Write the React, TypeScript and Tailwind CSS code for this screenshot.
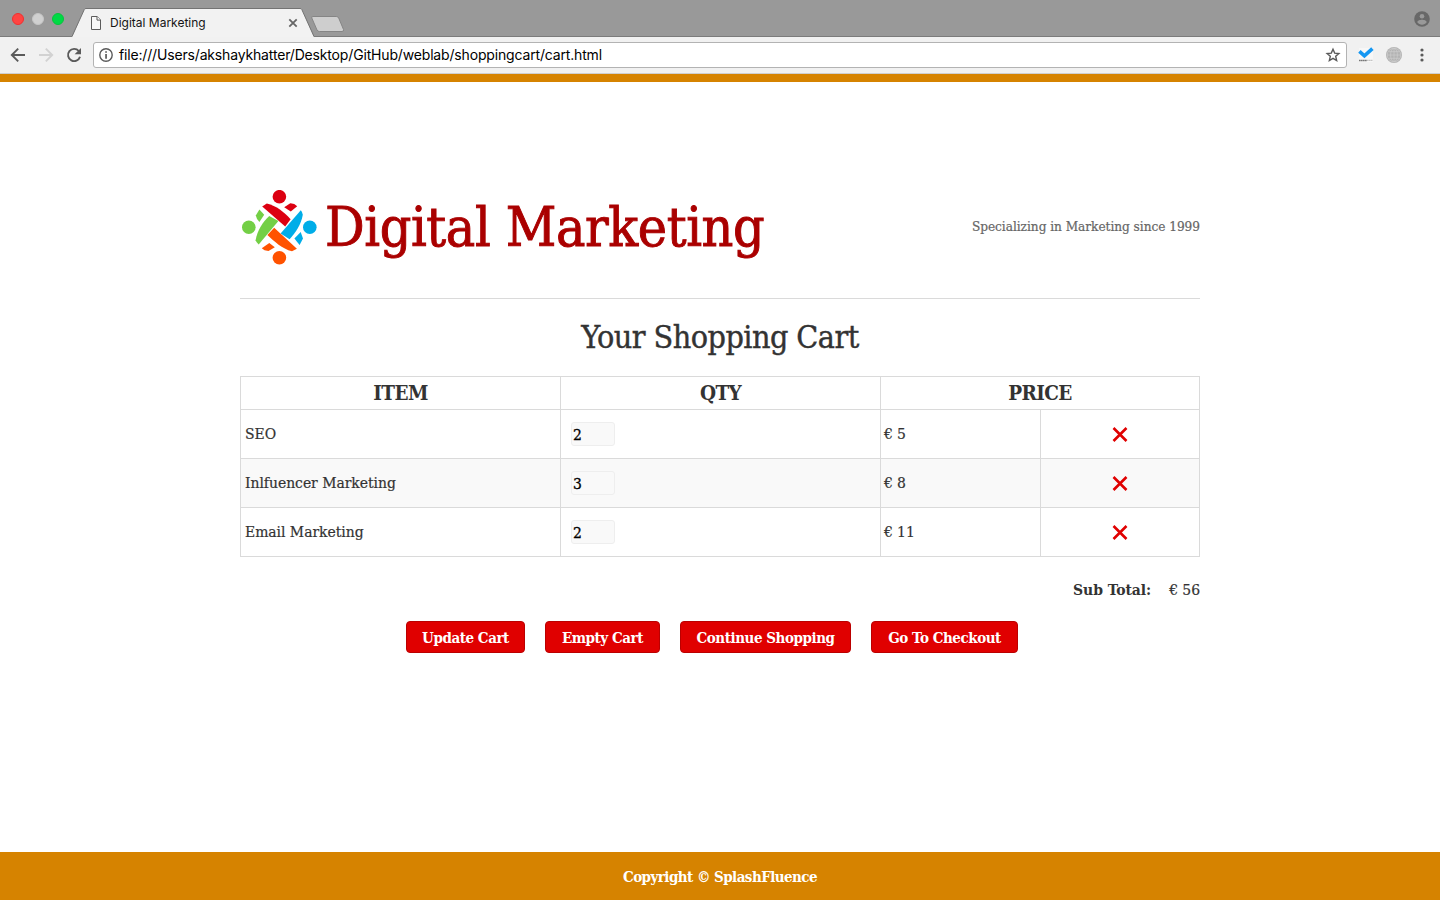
type CartItem = { name: string; qty: number; price: number };

const items: CartItem[] = [
  { name: "SEO", qty: 2, price: 5 },
  { name: "Inlfuencer Marketing", qty: 3, price: 8 },
  { name: "Email Marketing", qty: 2, price: 11 },
];

const actions = [
  { label: "Update Cart", width: "w-[119px]" },
  { label: "Empty Cart", width: "w-[115px]" },
  { label: "Continue Shopping", width: "w-[171px]" },
  { label: "Go To Checkout", width: "w-[147px]" },
];

function TabStrip() {
  return (
    <div className="flex h-[37px] shrink-0 border-b border-[#7b7b7b] bg-[#999999]">
      <div className="flex w-[72px] gap-2 pl-3 pt-[13px]">
        <span className="size-3 rounded-full border border-[#f0302f] bg-[#ff4442]" />
        <span className="size-3 rounded-full border border-[#c5c5c5] bg-[#d0d0d0]" />
        <span className="size-3 rounded-full border border-[#08c43c] bg-[#00da45]" />
      </div>
      <div className="relative h-[37px] w-[242px]">
        <svg className="absolute left-0 top-0" width="242" height="37" viewBox="0 0 242 37">
          <path d="M0 37 12.3 9.5Q12.8 8.5 14 8.5H228Q229.3 8.5 229.8 9.5L242 37Z" fill="#f2f2f2" />
          <path d="M0 36.5 12.3 9.5Q12.8 8.5 14 8.5H228Q229.3 8.5 229.8 9.5L242 36.5" fill="none" stroke="#737373" />
        </svg>
        <div className="relative flex h-full items-center pl-[19px] pt-[9px]">
          <svg width="10" height="14" viewBox="0 0 10 14" fill="#f8f8f8" stroke="#5c5c5c">
            <path d="M.5.5h5.7l3.3 3.4v9.6h-9z" />
            <path d="M6 .5v3.6h3.5" />
          </svg>
          <span className="ml-[9px] w-[178px] text-[12px] leading-4 text-[#151515]">Digital Marketing</span>
          <svg width="10" height="10" viewBox="0 0 10 10" stroke="#666" strokeWidth="1.8">
            <path d="m1.3 1.3 7.4 7.4m0-7.4L1.3 8.7" />
          </svg>
        </div>
      </div>
      <svg className="-ml-[4px] mt-[15px]" width="36" height="18" viewBox="0 0 36 18">
        <path d="M2.8 1.5h23.5q1.6 0 2.4 1.5l4.8 11.5q.5 2-1.5 2H9.5q-1.8 0-2.5-1.5L1.8 3q-.5-1.5 1-1.5Z" fill="#cecece" stroke="#858585" />
      </svg>
      <svg className="ml-auto mr-2.5 mt-[11px]" width="16" height="16" viewBox="0 0 16 16">
        <circle cx="8" cy="8" r="7.8" fill="#686868" />
        <circle cx="8" cy="5.3" r="2.3" fill="#999" />
        <path d="M3.3 11.2c0-1.8 3-2.5 4.7-2.5s4.7.7 4.7 2.5a5.6 5.6 0 0 1-9.4 0Z" fill="#999" />
      </svg>
    </div>
  );
}

function Toolbar() {
  return (
    <div className="flex h-[37px] shrink-0 items-center border-b border-[#cfcfcf] bg-[#f1f1f1] pl-2.5">
      <svg width="16" height="16" viewBox="0 0 16 16" fill="none" stroke="#5a5a5a" strokeWidth="1.9">
        <path d="M15 8H2M8.2 1.6 1.8 8l6.4 6.4" />
      </svg>
      <svg className="ml-3" width="16" height="16" viewBox="0 0 16 16" fill="none" stroke="#d2d2d2" strokeWidth="1.9">
        <path d="M1 8h13M7.8 1.6 14.2 8l-6.4 6.4" />
      </svg>
      <svg className="ml-3" width="16" height="16" viewBox="0 0 16 16">
        <path d="M12.8 4A6.1 6.1 0 1 0 14 9.7" fill="none" stroke="#5a5a5a" strokeWidth="1.9" />
        <path d="M15 .9v6.4H8.6z" fill="#5a5a5a" />
      </svg>
      <div className="ml-[11px] flex h-[26px] w-[1254px] items-center rounded-[3px] border border-[#b3b3b3] bg-white pl-[5px] pr-[5px]">
        <svg width="14" height="14" viewBox="0 0 14 14">
          <circle cx="7" cy="7" r="6.2" fill="none" stroke="#5a5a5a" strokeWidth="1.4" />
          <path d="M6.2 3.2h1.7v1.6H6.2zM6.2 6h1.7v4.8H6.2z" fill="#5a5a5a" />
        </svg>
        <span className="ml-[6px] flex-1 text-[14px] leading-5 tracking-[-0.165px] text-black">
          file:///Users/akshaykhatter/Desktop/GitHub/weblab/shoppingcart/cart.html
        </span>
        <svg width="16" height="16" viewBox="0 0 16 16" fill="none" stroke="#5a5a5a" strokeWidth="1.4">
          <path d="m8 2.2 1.7 3.9 4.2.4-3.2 2.8.95 4.2L8 11.3l-3.65 2.2.95-4.2-3.2-2.8 4.2-.4z" />
        </svg>
      </div>
      <svg className="ml-[11px]" width="16" height="16" viewBox="0 0 16 16">
        <path d="M1 1h14v14H1z" fill="#f7f7f7" />
        <path d="m1.4 4.4 5 4.4 8-7.2" fill="none" stroke="#1597f2" strokeWidth="3.6" />
        <path d="M1 13.4h8" stroke="#777" strokeWidth="1.5" strokeDasharray="1.7 .3" />
        <path d="M9 13.4h5.5" stroke="#c4c4c4" strokeWidth="1.4" strokeDasharray="1.7 .3" />
      </svg>
      <svg className="ml-3" width="16" height="16" viewBox="0 0 16 16">
        <circle cx="8" cy="8" r="8" fill="#b3b3b3" />
        <g fill="none" stroke="#cdcdcd" strokeWidth=".7">
          <ellipse cx="8" cy="8" rx="3.4" ry="6.8" />
          <circle cx="8" cy="8" r="6.8" />
          <path d="M8 1v14M1 8h14M2.5 4.7h11M2.5 11.3h11" />
        </g>
      </svg>
      <svg className="ml-[18px]" width="4" height="14" viewBox="0 0 4 14" fill="#5a5a5a">
        <circle cx="2" cy="2" r="1.6" />
        <circle cx="2" cy="7" r="1.6" />
        <circle cx="2" cy="12" r="1.6" />
      </svg>
    </div>
  );
}

function Logo() {
  return (
    <svg className="ml-[2px] mt-[2px]" width="75" height="75" viewBox="0 0 75 75">
      <g fill="#dc0011">
        <circle cx="37.4" cy="6.7" r="6.8" />
        <path d="M20.2 16.4 24.8 13.6C34.5 16 42 22 48.6 29.2L43.2 36.4Z" />
        <path d="M42.2 17.2 48.3 13.3Q52.5 13.2 55.2 16.2L48.8 21.4Z" />
      </g>
      <g fill="#00ade8">
        <circle cx="67.8" cy="37.3" r="6.8" />
        <path d="M58.8 20.2Q60.7 22.3 60.8 24.8C59 35 54 42 47.6 49.2L38.6 43.6Z" />
        <path d="M58.7 41.9 61 48.4 57.6 54.9 52.4 48.6Z" />
      </g>
      <g fill="#ff5200">
        <circle cx="37.4" cy="67.8" r="6.8" />
        <path d="M32.2 37.8 54.9 58.8 50 61.3C40 58.5 32.5 51.5 25.4 44.9Z" />
        <path d="M27.3 53 32.8 57.2 26.5 61Q22 60.8 19.8 58.2Z" />
      </g>
      <g fill="#73cf45">
        <circle cx="6.8" cy="37.3" r="6.8" />
        <path d="M27.2 26 36.4 31 16.7 54.4Q14.3 52.5 13.6 50.2C15.5 40 20.5 32.5 27.2 26Z" />
        <path d="M17.4 19.6 22.2 24.8 17.4 32Q14.3 28.8 13.8 25.6Z" />
      </g>
    </svg>
  );
}

function CartTable() {
  return (
    <div className="border-l border-t border-[#dadada] text-[15.5px] tracking-[-0.03px]">
      <div className="grid h-[33px] grid-cols-[320px_320px_319px] text-center text-[20.5px] font-bold tracking-[-0.6px]">
        {["ITEM", "QTY", "PRICE"].map((title) => (
          <div key={title} className="border-b border-r border-[#dadada] leading-8">
            {title}
          </div>
        ))}
      </div>
      {items.map((item) => (
        <div key={item.name} className="grid h-[49px] grid-cols-[320px_320px_160px_159px] even:bg-white odd:bg-[#f9f9f9] [&>div]:flex [&>div]:items-center [&>div]:border-b [&>div]:border-r [&>div]:border-[#dadada]">
          <div className="pl-1 pt-0.5 [-webkit-text-stroke:0.2px]">{item.name}</div>
          <div className="pl-2.5">
            <input
              className="h-6 w-11 rounded-[3px] border border-[#eeeeee] bg-[#f9f9f9] px-px pt-0.5 text-[15.5px] text-black [-webkit-text-stroke:0.3px]"
              defaultValue={item.qty}
            />
          </div>
          <div className="pl-[3px] pt-0.5 tracking-[-0.1px] [-webkit-text-stroke:0.2px]">€ {item.price}</div>
          <div className="justify-center">
            <svg width="16" height="16" viewBox="0 0 16 16" stroke="#e00000" strokeWidth="2.6">
              <path d="m1.5 2 13 13m0-13-13 13" />
            </svg>
          </div>
        </div>
      ))}
    </div>
  );
}

export default function App() {
  return (
    <div className="flex h-[900px] w-[1440px] flex-col overflow-hidden bg-white font-['Inter',sans-serif]">
      <TabStrip />
      <Toolbar />
      <div className="flex flex-1 flex-col border-t-8 border-[#d68300] font-['DejaVu_Serif_Condensed','DejaVu_Serif',serif] text-[#333333]">
        <main className="mx-auto w-[960px] flex-1 pt-[106px]">
          <header className="flex h-[111px] border-b border-[#dadada]">
            <Logo />
            <h1 className="ml-[8px] mt-[4px] text-[55px] leading-[70px] tracking-[-0.4px] text-[#aa0000] [-webkit-text-stroke:0.9px]">
              Digital Marketing
            </h1>
            <p className="ml-auto mt-[28px] text-[13.5px] leading-5 tracking-[-0.03px] text-[#666666] [-webkit-text-stroke:0.2px]">
              Specializing in Marketing since 1999
            </p>
          </header>
          <h2 className="mb-[17px] mt-[16px] text-center text-[32px] leading-[44px] tracking-[-0.55px] [-webkit-text-stroke:0.4px]">
            Your Shopping Cart
          </h2>
          <CartTable />
          <div className="mt-[22px] flex justify-end gap-[18px] text-[15.5px] leading-[22px] tracking-[-0.05px]">
            <strong>Sub Total:</strong>
            <span className="[-webkit-text-stroke:0.2px]">€ 56</span>
          </div>
          <div className="mt-5 flex gap-5 pl-[166px]">
            {actions.map((action) => (
              <button
                key={action.label}
                className={`${action.width} h-8 whitespace-nowrap rounded-[4px] border border-[#bb0000] bg-[#e00000] pt-0.5 text-center text-[15px] font-bold tracking-[-0.45px] text-white`}
              >
                {action.label}
              </button>
            ))}
          </div>
        </main>
        <footer className="h-12 bg-[#d68300] text-center text-[15px] font-bold leading-[51px] tracking-[-0.55px] text-white">
          Copyright © SplashFluence
        </footer>
      </div>
    </div>
  );
}
